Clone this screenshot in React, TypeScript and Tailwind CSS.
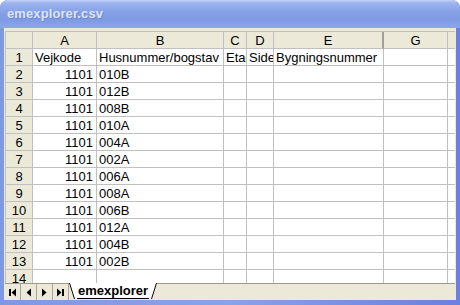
import React from 'react';

const cols = ['27px', '64px', '127px', '23px', '27px', '110px', '64px'];
const letters = ['A', 'B', 'C', 'D', 'E', 'G'];

const codes = ['010B', '012B', '008B', '010A', '004A', '002A', '006A', '008A', '006B', '012A', '004B', '002B'];

type Row = { n: number; cells: { text: string; right?: boolean }[] };

const rows: Row[] = [
  {
    n: 1,
    cells: [{ text: 'Vejkode' }, { text: 'Husnummer/bogstav' }, { text: 'Etage' }, { text: 'Side' }, { text: 'Bygningsnummer' }, { text: '' }],
  },
  ...codes.map((c, i) => ({
    n: i + 2,
    cells: [{ text: '1101', right: true }, { text: c }, { text: '' }, { text: '' }, { text: '' }, { text: '' }],
  })),
  { n: 14, cells: [{ text: '' }, { text: '' }, { text: '' }, { text: '' }, { text: '' }, { text: '' }] },
];

function NavButton({ kind }: { kind: 'first' | 'prev' | 'next' | 'last' }) {
  return (
    <div className="w-[16px] h-[16px] flex items-center justify-center border-r border-[#a8a698]">
      <svg width="9" height="9" viewBox="0 0 9 9">
        {kind === 'first' && (
          <>
            <rect x="1" y="1" width="2" height="7" fill="#000" />
            <polygon points="8,0.5 3.5,4.5 8,8.5" fill="#000" />
          </>
        )}
        {kind === 'prev' && <polygon points="7,0.5 2.5,4.5 7,8.5" fill="#000" />}
        {kind === 'next' && <polygon points="2,0.5 6.5,4.5 2,8.5" fill="#000" />}
        {kind === 'last' && (
          <>
            <polygon points="1,0.5 5.5,4.5 1,8.5" fill="#000" />
            <rect x="6" y="1" width="2" height="7" fill="#000" />
          </>
        )}
      </svg>
    </div>
  );
}

export default function App() {
  const gridCols = 'grid grid-cols-[27px_64px_127px_23px_27px_110px_64px_1fr]';
  return (
    <div className="w-[460px] h-[305px] bg-white font-['Liberation_Sans',Arial,sans-serif] text-[13px] text-black">
      <div className="w-full h-full flex flex-col rounded-t-[8px] overflow-hidden bg-[#7b93e0]">
        {/* title bar */}
        <div className="h-[28px] shrink-0 flex items-center pl-[7px] bg-[linear-gradient(to_bottom,#c4d2f6_0px,#9cb3ee_3px,#89a3e8_40%,#7f9ae4_70%,#8ba6ea_100%)]">
          <span className="font-bold text-[13px] text-[#dbe5f9] [text-shadow:1px_1px_0_#6f86cf] tracking-[0.1px]">
            emexplorer.csv
          </span>
        </div>

        {/* window body */}
        <div className="flex-1 flex flex-col px-[4px] pb-[5px] bg-[linear-gradient(to_right,#7f98e2,#8aa2e6_50%,#6c7fdc)] min-h-0">
          <div className="flex-1 flex flex-col bg-[#ece9d8] pt-[3px] pl-[1px] pr-[1px] min-h-0">
            {/* sheet grid */}
            <div className="h-[252px] overflow-hidden bg-white border-l border-t border-[#c0c0c0]">
              <div className={`${gridCols} h-[17px]`}>
                <div className="bg-[#ece9d8] border-r border-b border-[#c0c0c0]" />
                {letters.map((l, i) => (
                  <div
                    key={l}
                    className={`bg-[#ece9d8] border-b border-[#c0c0c0] flex items-center justify-center leading-none ${
                      l === 'E' ? 'border-r-2 border-r-[#a0a0a0]' : 'border-r'
                    }`}
                  >
                    {l}
                  </div>
                ))}
                <div className="bg-[#ece9d8] border-b border-[#c0c0c0]" />
              </div>
              {rows.map((r) => (
                <div key={r.n} className={`${gridCols} h-[17px]`}>
                  <div className="bg-[#ece9d8] border-r border-b border-[#c0c0c0] flex items-center justify-center leading-none">
                    {r.n}
                  </div>
                  {r.cells.map((c, i) => (
                    <div
                      key={i}
                      className={`border-r border-b border-[#c0c0c0] flex items-center overflow-hidden whitespace-nowrap leading-none ${
                        c.right ? 'justify-end pr-[3px]' : 'justify-start pl-[2px]'
                      }`}
                    >
                      {c.text}
                    </div>
                  ))}
                  <div className="border-b border-[#c0c0c0]" />
                </div>
              ))}
            </div>

            {/* sheet tabs */}
            <div className="h-[17px] shrink-0 flex items-start border-t border-[#9d9b8f]">
              <div className="flex">
                <NavButton kind="first" />
                <NavButton kind="prev" />
                <NavButton kind="next" />
                <NavButton kind="last" />
              </div>
              <div className="flex h-[16px] -mt-[1px]">
                <svg width="8" height="16" viewBox="0 0 8 16">
                  <polygon points="0,0 8,0 8,16 5,16" fill="#fff" />
                  <line x1="0.5" y1="0" x2="5.5" y2="16" stroke="#000" strokeWidth="1" />
                </svg>
                <div className="bg-white h-[16px] flex items-center font-bold text-[13px] leading-none px-[1px] border-b border-[#000]">
                  emexplorer
                </div>
                <svg width="8" height="16" viewBox="0 0 8 16">
                  <polygon points="0,0 8,0 3,16 0,16" fill="#fff" />
                  <line x1="7.5" y1="0" x2="2.5" y2="16" stroke="#000" strokeWidth="1" />
                </svg>
              </div>
            </div>
          </div>
        </div>
      </div>
    </div>
  );
}
